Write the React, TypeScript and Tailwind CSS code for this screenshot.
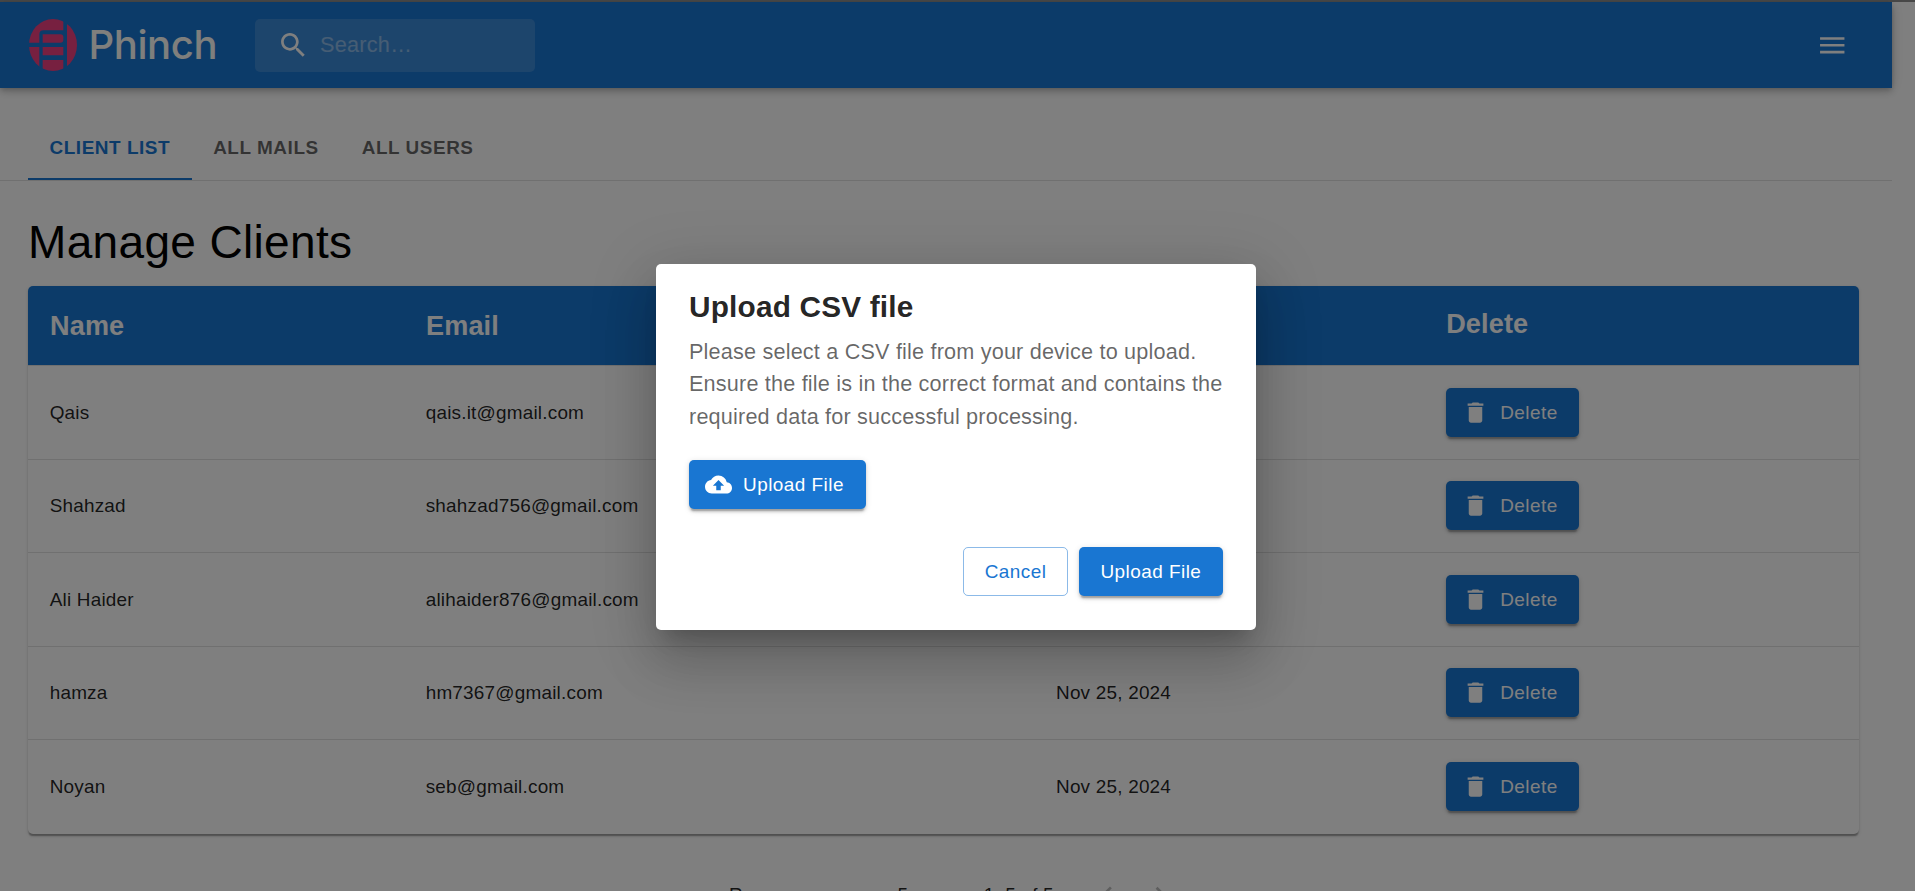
import type { ReactNode } from "react";

const tabs = ["CLIENT LIST", "ALL MAILS", "ALL USERS"];

const clients = [
  { name: "Qais", email: "qais.it@gmail.com", date: "Nov 25, 2024" },
  { name: "Shahzad", email: "shahzad756@gmail.com", date: "Nov 25, 2024" },
  { name: "Ali Haider", email: "alihaider876@gmail.com", date: "Nov 25, 2024" },
  { name: "hamza", email: "hm7367@gmail.com", date: "Nov 25, 2024" },
  { name: "Noyan", email: "seb@gmail.com", date: "Nov 25, 2024" },
];

const columns = "grid grid-cols-[376px_630px_390.5px_1fr]";

const raised =
  "shadow-[0_4px_1.4px_-2.7px_rgba(0,0,0,0.2),0_2.7px_2.7px_0_rgba(0,0,0,0.14),0_1.4px_6.8px_0_rgba(0,0,0,0.12)]";

function Icon({ d, className }: { d: string; className: string }) {
  return (
    <svg viewBox="0 0 24 24" fill="currentColor" className={className}>
      <path d={d} />
    </svg>
  );
}

const paths = {
  search:
    "M15.5 14h-.79l-.28-.27C15.41 12.59 16 11.11 16 9.5 16 5.91 13.09 3 9.5 3S3 5.91 3 9.5 5.91 16 9.5 16c1.61 0 3.09-.59 4.23-1.57l.27.28v.79l5 4.99L20.49 19zm-6 0C7.01 14 5 11.99 5 9.5S7.01 5 9.5 5 14 7.01 14 9.5 11.99 14 9.5 14",
  menu: "M3 18h18v-2H3zm0-5h18v-2H3zm0-7v2h18V6z",
  trash: "M6 19c0 1.1.9 2 2 2h8c1.1 0 2-.9 2-2V7H6zM19 4h-3.5l-1-1h-5l-1 1H5v2h14z",
  cloud:
    "M19.35 10.04C18.67 6.59 15.64 4 12 4 9.11 4 6.6 5.64 5.35 8.04 2.34 8.36 0 10.91 0 14c0 3.31 2.69 6 6 6h13c2.76 0 5-2.24 5-5 0-2.64-2.05-4.78-4.65-4.96M14 13v4h-4v-4H7l5-5 5 5z",
  left: "M15.41 16.09l-4.58-4.59 4.58-4.59L14 5.5l-6 6 6 6z",
  right: "M8.59 16.34l4.58-4.59-4.58-4.59L10 5.75l6 6-6 6z",
  drop: "M7 10l5 5 5-5z",
};

function Button({ icon, children }: { icon?: string; children: ReactNode }) {
  return (
    <button
      className={`flex h-[49px] items-center rounded-[5px] bg-[#1976d2] px-[21.67px] text-[18.96px] tracking-[0.0245em] whitespace-nowrap text-white ${raised}`}
    >
      {icon && <Icon d={icon} className="mr-[10.8px] -ml-[5.4px] size-[27px]" />}
      <span className="pt-px">{children}</span>
    </button>
  );
}

function Logo() {
  return (
    <div className="flex h-[53px] items-center">
      <svg viewBox="0 0 144 156" preserveAspectRatio="none" className="h-[52px] w-[48px]">
        <defs>
          <clipPath id="disc">
            <ellipse cx="72" cy="78" rx="72" ry="78" />
          </clipPath>
        </defs>
        <g clipPath="url(#disc)" fill="#ee4080">
          <path d="M0 0H103V34H44Q31 34 31 46V71H0Z" />
          <path d="M0 84H31V156H0Z" />
          <path d="M41 46H94Q103 46 103 55V62Q103 71 94 71H41Z" />
          <path d="M41 84H103V109H41Z" />
          <path d="M41 123H103V156H41Z" />
          <path d="M114 0H144V156H114Z" />
        </g>
      </svg>
      <span className="ml-[11.5px] pb-px font-[Inter,sans-serif] text-[40px] leading-[52px] font-medium tracking-[-0.01em] text-[#fffffa]">
        Phinch
      </span>
    </div>
  );
}

function Header() {
  return (
    <header className="flex h-[86px] w-[1892px] shrink-0 items-center bg-[#1976d2] pr-[44px] pl-[29px] text-white shadow-[0_2.7px_5.4px_-1.4px_rgba(0,0,0,0.2),0_5.4px_6.8px_0_rgba(0,0,0,0.14),0_1.4px_13.5px_0_rgba(0,0,0,0.12)]">
      <div className="w-[226px]">
        <Logo />
      </div>
      <div className="flex h-[53px] w-[280px] items-center rounded-[5px] bg-white/15 pl-[21.67px]">
        <Icon d={paths.search} className="size-[32.5px]" />
        <span className="ml-[10.8px] text-[21.67px] tracking-[0.012em] text-white/42">Search…</span>
      </div>
      <Icon d={paths.menu} className="ml-auto size-[32.5px]" />
    </header>
  );
}

function ClientTable() {
  return (
    <section className="mt-[15px] ml-[28px] w-[1831px] shrink-0 rounded-[5px] bg-white shadow-[0_2.7px_1.4px_-1.4px_rgba(0,0,0,0.2),0_1.4px_1.4px_0_rgba(0,0,0,0.14),0_1.4px_4px_0_rgba(0,0,0,0.12)]">
      <div
        className={`${columns} h-[80px] rounded-t-[5px] border-b border-[#e0e0e0] bg-[#1976d2] bg-clip-padding text-[27.08px] leading-[79px] font-bold tracking-[0.005em] text-white`}
      >
        <div className="pl-[22px]">Name</div>
        <div className="pl-[22px]">Email</div>
        <div />
        <div className="pl-[21.67px] leading-[76px]">Delete</div>
      </div>
      {clients.map((c) => (
        <div
          key={c.email}
          className={`${columns} h-[93.5px] items-center border-b border-[#e0e0e0] text-[18.96px] tracking-[0.01071em] text-black/87 last:border-b-0`}
        >
          <div className="pt-px pl-[21.67px]">{c.name}</div>
          <div className="pt-px pl-[21.67px]">{c.email}</div>
          <div className="pt-px pl-[22px]">{c.date}</div>
          <div className="flex pl-[21.67px]">
            <Button icon={paths.trash}>Delete</Button>
          </div>
        </div>
      ))}
    </section>
  );
}

function UploadDialog() {
  return (
    <div
      role="dialog"
      className="flex h-[366px] w-[600px] flex-col rounded-[5px] bg-white px-[33px] pt-[23px] shadow-[0_15px_20px_-9.5px_rgba(0,0,0,0.2),0_32.5px_51.5px_4px_rgba(0,0,0,0.14),0_12px_62px_11px_rgba(0,0,0,0.12)]"
    >
      <h2 className="text-[29.8px] leading-[40px] font-bold tracking-[0.006em] text-black/87">Upload CSV file</h2>
      <p className="mt-[8.5px] text-[21.67px] leading-[32.5px] tracking-[0.008em] whitespace-nowrap text-black/60">
        Please select a CSV file from your device to upload.
        <br />
        Ensure the file is in the correct format and contains the
        <br />
        required data for successful processing.
      </p>
      <div className="mt-[27px] flex">
        <Button icon={paths.cloud}>Upload File</Button>
      </div>
      <div className="mt-[38px] flex justify-end gap-[11px]">
        <button className="h-[49px] rounded-[5px] border border-[#1976d2]/50 px-[20.5px] pt-px text-[18.96px] tracking-[0.0235em] text-[#1976d2]">
          Cancel
        </button>
        <Button>Upload File</Button>
      </div>
    </div>
  );
}

export default function App() {
  return (
    <div className="relative flex h-[891px] w-[1915px] flex-col overflow-hidden bg-white font-['Liberation_Sans',Arial,sans-serif]">
      <div className="h-[2px] shrink-0 bg-[#909090]" />
      <Header />
      <nav className="mt-[27px] flex h-[66px] w-[1892px] shrink-0 border-b border-[#e0e0e0] pl-[28px] text-[18.96px] font-bold tracking-[0.02857em]">
        {tabs.map((t, i) => (
          <div
            key={t}
            className={`flex h-[65px] items-center border-b-2 px-[21.5px] pt-[4px] ${
              i === 0 ? "border-[#1976d2] text-[#1976d2]" : "border-transparent text-black/60"
            }`}
          >
            {t}
          </div>
        ))}
      </nav>
      <h1 className="mt-[33px] ml-[28px] h-[57px] shrink-0 text-[46px] leading-[57px] tracking-[0.00735em] text-black">
        Manage Clients
      </h1>
      <ClientTable />
      <footer className="mt-[27px] ml-[729px] flex h-[70px] shrink-0 items-center text-[18.96px] tracking-[0.01071em] text-black/87">
        <span>Rows per page:</span>
        <span className="-mt-px ml-[33px]">5</span>
        <Icon d={paths.drop} className="size-[32.5px]" />
        <span className="ml-[43px]">1–5 of 5</span>
        <Icon d={paths.left} className="ml-[37px] size-[32.5px] text-black/26" />
        <Icon d={paths.right} className="ml-[21px] size-[32.5px] text-black/26" />
      </footer>
      <div className="absolute inset-0 flex items-start justify-center bg-black/50 pt-[264px] pr-[3px]">
        <UploadDialog />
      </div>
    </div>
  );
}
